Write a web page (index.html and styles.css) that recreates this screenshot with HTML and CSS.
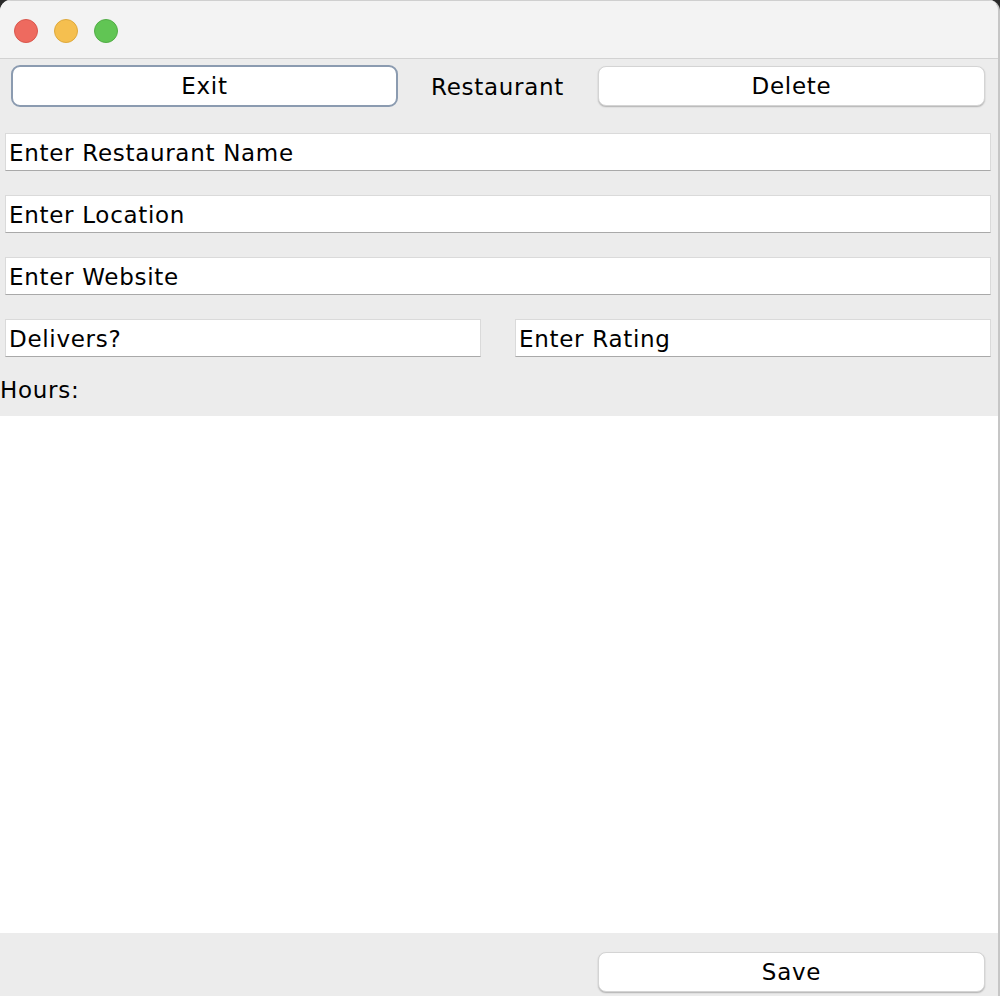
FILE: index.html
```html
<!DOCTYPE html>
<html>
<head>
<meta charset="utf-8">
<title>Restaurant</title>
<link rel="stylesheet" href="styles.css">
</head>
<body>
<div class="window">
  <div class="titlebar">
    <span class="light red"></span>
    <span class="light yellow"></span>
    <span class="light green"></span>
  </div>
  <div class="toolbar">
    <button class="btn btn-focus">Exit</button>
    <span class="title-label">Restaurant</span>
    <button class="btn btn-delete">Delete</button>
  </div>
  <div class="fields">
    <div class="field">Enter Restaurant Name</div>
    <div class="field">Enter Location</div>
    <div class="field">Enter Website</div>
    <div class="field-row">
      <div class="field field-left">Delivers?</div>
      <div class="field field-right">Enter Rating</div>
    </div>
  </div>
  <div class="hours-label">Hours:</div>
  <div class="hours-area"></div>
  <div class="footer">
    <button class="btn btn-save">Save</button>
  </div>
</div>
</body>
</html>
```

FILE: styles.css
```css
* { box-sizing: border-box; }
html, body {
  margin: 0;
  padding: 0;
  background: #2a2a2a;
}
body {
  width: 1000px;
  height: 996px;
  overflow: hidden;
  font-family: "DejaVu Sans", "Liberation Sans", sans-serif;
  font-size: 23px;
  letter-spacing: 0.7px;
  color: #000;
}
.window {
  width: 1000px;
  height: 996px;
  background: #ececec;
  border-radius: 11px 11px 0 0;
  border-right: 2px solid #c6c6c6;
  overflow: hidden;
  display: flex;
  flex-direction: column;
}
.titlebar {
  height: 59px;
  flex: none;
  background: #f3f3f3;
  border-top: 1px solid #cfcfcf;
  border-bottom: 1px solid #d2d2d2;
  display: flex;
  align-items: center;
  padding-left: 14px;
  gap: 16px;
}
.light {
  width: 24px;
  height: 24px;
  border-radius: 50%;
  display: block;
  margin-top: 2px;
}
.red { background: #ee6a5f; border: 1px solid #d9574d; }
.yellow { background: #f5bf4f; border: 1px solid #dea93c; }
.green { background: #61c554; border: 1px solid #52ad46; }

.toolbar {
  flex: none;
  display: flex;
  padding: 6px 0 0 11px;
  height: 74px;
  align-items: flex-start;
}
.btn {
  font-family: inherit;
  font-size: 23px;
  letter-spacing: 0.7px;
  color: #000;
  background: #fff;
  border: 1px solid #d4d4d4;
  border-radius: 8px;
  box-shadow: 0 1px 1.5px rgba(0, 0, 0, 0.25);
  width: 387px;
  height: 40px;
  padding: 0;
  line-height: 1;
}
.btn-focus {
  height: 42px;
  border: 2px solid #8b9bb0;
  border-radius: 9px;
  box-shadow: none;
}
.title-label {
  margin: 0 0 0 33px;
  width: 167px;
  line-height: 44px;
}
.btn-delete {
  margin-top: 1px;
}
.fields {
  flex: none;
  display: flex;
  flex-direction: column;
  gap: 24px;
  padding-left: 5px;
}
.field {
  width: 986px;
  height: 38px;
  background: #fff;
  border: 1px solid #dadada;
  border-bottom: 1px solid #a9a9a9;
  padding: 1px 0 0 3px;
  line-height: 36px;
  white-space: nowrap;
}
.field-row {
  display: flex;
  gap: 34px;
}
.field-left { width: 476px; }
.field-right { width: 476px; }
.hours-label {
  flex: none;
  height: 59px;
  padding-top: 20px;
  line-height: 26px;
}
.hours-area {
  flex: 1;
  background: #fff;
}
.footer {
  flex: none;
  height: 63px;
  padding: 19px 0 0 598px;
}
.btn-save {
  height: 40px;
}
```
